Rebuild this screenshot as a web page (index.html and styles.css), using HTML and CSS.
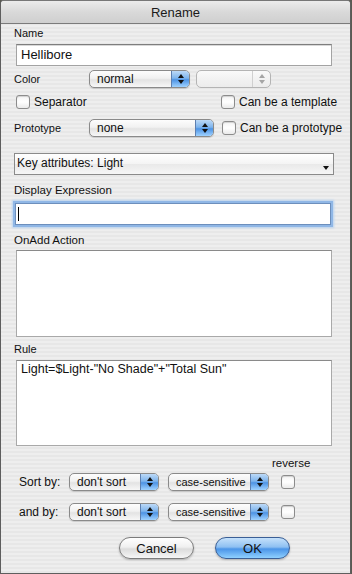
FILE: index.html
```html
<!DOCTYPE html>
<html lang="en">
<head>
    <meta charset="UTF-8">
    <title>Rename</title>
    <link rel="stylesheet" href="styles.css">
</head>
<body>

    <div class="window">
        <div class="titlebar">Rename</div>
        <div class="content">

            <div class="label row-name">Name</div>
            <div class="field name-field">Hellibore</div>

            <div class="row row-color">
                <span class="row-label">Color</span>
                <div class="popup popup-color"><span>normal</span><span class="cap"></span></div>
                <div class="popup popup-off"><span></span><span class="cap"></span></div>
            </div>

            <div class="row row-sep">
                <label class="check check-left"><span class="box"></span>Separator</label>
                <label class="check"><span class="box"></span>Can be a template</label>
            </div>

            <div class="row row-proto">
                <span class="row-label">Prototype</span>
                <div class="popup popup-proto"><span>none</span><span class="cap"></span></div>
                <label class="check"><span class="box"></span>Can be a prototype</label>
            </div>

            <div class="keybar">Key attributes: Light<span class="tri"></span></div>

            <div class="label row-display">Display Expression</div>
            <div class="field display-field"><span class="caret"></span></div>

            <div class="label row-onadd">OnAdd Action</div>
            <div class="area onadd-area"></div>

            <div class="label row-rule">Rule</div>
            <div class="area rule-area">Light=$Light-"No Shade"+"Total Sun"</div>

            <div class="reverse">reverse</div>
            <div class="row sort-row">
                <span class="sort-label">Sort by:</span>
                <div class="popup popup-sort"><span>don't sort</span><span class="cap"></span></div>
                <div class="popup popup-case"><span>case-sensitive</span><span class="cap"></span></div>
                <span class="box"></span>
            </div>
            <div class="row sort-row sort-row2">
                <span class="sort-label">and by:</span>
                <div class="popup popup-sort"><span>don't sort</span><span class="cap"></span></div>
                <div class="popup popup-case"><span>case-sensitive</span><span class="cap"></span></div>
                <span class="box"></span>
            </div>

            <div class="buttons">
                <button class="btn">Cancel</button>
                <button class="btn btn-ok">OK</button>
            </div>
        </div>
    </div>

</body>
</html>
```

FILE: styles.css
```css
body {
    margin: 0;
    background: #5a5a52;
    font-family: "Liberation Sans", Arial, sans-serif;
    color: #111;
}
.window {
    width: 349px;
    height: 572px;
    border: 1px solid #5e5e5e;
    border-top-color: #777;
    border-radius: 4px 4px 0 0;
    overflow: hidden;
    background: repeating-linear-gradient(#eeeeee 0px, #eeeeee 2px, #e7e7e7 2px, #e7e7e7 4px);
}
.titlebar {
    height: 22px;
    line-height: 23px;
    text-align: center;
    font-size: 13px;
    color: #1a1a1a;
    background: linear-gradient(#ececec, #d9d9d9 50%, #cfcfcf);
    border-bottom: 1px solid #7b7b7b;
}
.content {
    padding: 0 0 0 13px;
}
.label {
    height: 16px;
    line-height: 16px;
    font-size: 11.5px;
}
.row-name {
    margin-top: 1px;
    font-size: 11px;
}
.field {
    box-sizing: border-box;
    width: 316px;
    height: 22px;
    margin-left: 2px;
    background: #fff;
    border: 1px solid #a3a3a3;
    border-top-color: #7e7e7e;
    box-shadow: inset 0 1px 0 #d8d8d8;
}
.name-field {
    margin-top: 3px;
    padding-left: 4px;
    font-size: 13px;
    line-height: 20px;
}
.row {
    display: flex;
    align-items: center;
    height: 20px;
}
.row-label {
    width: 75px;
    font-size: 11px;
}
.row-color {
    margin-top: 3px;
}
.row-sep {
    height: 16px;
    margin-top: 5px;
    padding-left: 2px;
}
.row-proto {
    margin-top: 8px;
}
.check {
    display: flex;
    align-items: center;
    gap: 4px;
    font-size: 12px;
}
.check-left {
    width: 205px;
}
.row-proto .check {
    margin-left: 8px;
}
.box {
    box-sizing: border-box;
    display: inline-block;
    width: 14px;
    height: 14px;
    border: 1px solid #8c8c8c;
    border-radius: 3px;
    background: linear-gradient(#f4f4f4, #ffffff 50%, #eaeaea);
    box-shadow: inset 0 1px 1px rgba(0, 0, 0, 0.15);
}

/* popup buttons */
.popup {
    box-sizing: border-box;
    position: relative;
    height: 18px;
    border: 1px solid #8a8a8a;
    border-radius: 5px;
    background: linear-gradient(#fdfdfd, #f1f1f1 45%, #e3e3e3 55%, #f7f7f7);
    font-size: 12px;
    line-height: 16px;
    padding-left: 7px;
    overflow: hidden;
    white-space: nowrap;
    box-shadow: 0 1px 1px rgba(0, 0, 0, 0.15);
}
.popup .cap {
    position: absolute;
    right: 0;
    top: 0;
    bottom: 0;
    width: 17px;
    border-left: 1px solid #5d7fb0;
    background: linear-gradient(#bcd9f7, #7eb4ec 45%, #4d93e4 55%, #9fd2ff);
}
.popup .cap::before,
.popup .cap::after {
    content: "";
    position: absolute;
    left: 6px;
    border-left: 3px solid transparent;
    border-right: 3px solid transparent;
}
.popup .cap::before {
    top: 3px;
    border-bottom: 4px solid #111;
}
.popup .cap::after {
    top: 9px;
    border-top: 4px solid #111;
}
.popup-color {
    width: 101px;
}
.popup-off {
    width: 75px;
    margin-left: 6px;
    border-color: #b4b4b4;
    background: linear-gradient(#fafafa, #f2f2f2 50%, #ececec);
    box-shadow: none;
}
.popup-off .cap {
    border-left-color: #d0d0d0;
    background: none;
}
.popup-off .cap::before {
    border-bottom-color: #a5a5a5;
}
.popup-off .cap::after {
    border-top-color: #a5a5a5;
}
.popup-proto {
    width: 125px;
}

.keybar {
    box-sizing: border-box;
    position: relative;
    width: 320px;
    height: 22px;
    margin-top: 15px;
    padding-left: 2px;
    border: 1px solid #8a8a8a;
    background: linear-gradient(#ffffff, #f4f4f4 50%, #e9e9e9 51%, #f6f6f6);
    font-size: 12px;
    line-height: 19px;
}
.keybar .tri {
    position: absolute;
    right: 4px;
    top: 12px;
    border-left: 3px solid transparent;
    border-right: 3px solid transparent;
    border-top: 4px solid #111;
}
.row-display {
    margin-top: 7px;
}
.display-field {
    margin-top: 5px;
    margin-left: 1px;
    position: relative;
    border-color: #6d8fbc;
    box-shadow: 0 0 0 2px #90b7e6, 0 0 2px 3px #b9d3f0;
}
.caret {
    position: absolute;
    left: 2px;
    top: 3px;
    width: 1px;
    height: 14px;
    background: #000;
}
.row-onadd {
    margin-top: 7px;
}
.area {
    box-sizing: border-box;
    width: 316px;
    margin-left: 2px;
    background: #fff;
    border: 1px solid #a9a9a9;
    border-top-color: #8a8a8a;
}
.onadd-area {
    height: 87px;
    margin-top: 2px;
}
.row-rule {
    margin-top: 4px;
    font-size: 11px;
}
.rule-area {
    height: 86px;
    margin-top: 3px;
    padding: 1px 0 0 4px;
    font-size: 12.5px;
    line-height: 15px;
}

/* sort rows */
.reverse {
    margin: 9px 0 0 258px;
    height: 16px;
    line-height: 16px;
    font-size: 11.5px;
}
.sort-row {
    margin-top: 1px;
}
.sort-row2 {
    margin-top: 10px;
}
.sort-label {
    width: 50px;
    padding-left: 5px;
    font-size: 12px;
}
.popup-sort {
    width: 90px;
}
.popup-case {
    width: 101px;
    margin-left: 9px;
    font-size: 11px;
}
.sort-row .box {
    margin-left: 12px;
}

/* push buttons */
.buttons {
    display: flex;
    gap: 21px;
    margin: 15px 0 0 105px;
}
.btn {
    width: 75px;
    height: 22px;
    padding: 0;
    border: 1px solid #7c7c7c;
    border-radius: 11px;
    font-family: "Liberation Sans", Arial, sans-serif;
    font-size: 13px;
    color: #111;
    background: linear-gradient(#ffffff, #f0f0f0 45%, #dcdcdc 55%, #f6f6f6);
    box-shadow: 0 1px 2px rgba(0, 0, 0, 0.25);
}
.btn-ok {
    border-color: #3a5f96;
    background: linear-gradient(#c5e1fb, #8ec0f2 45%, #4b95e8 55%, #8fd0ff);
}
```
